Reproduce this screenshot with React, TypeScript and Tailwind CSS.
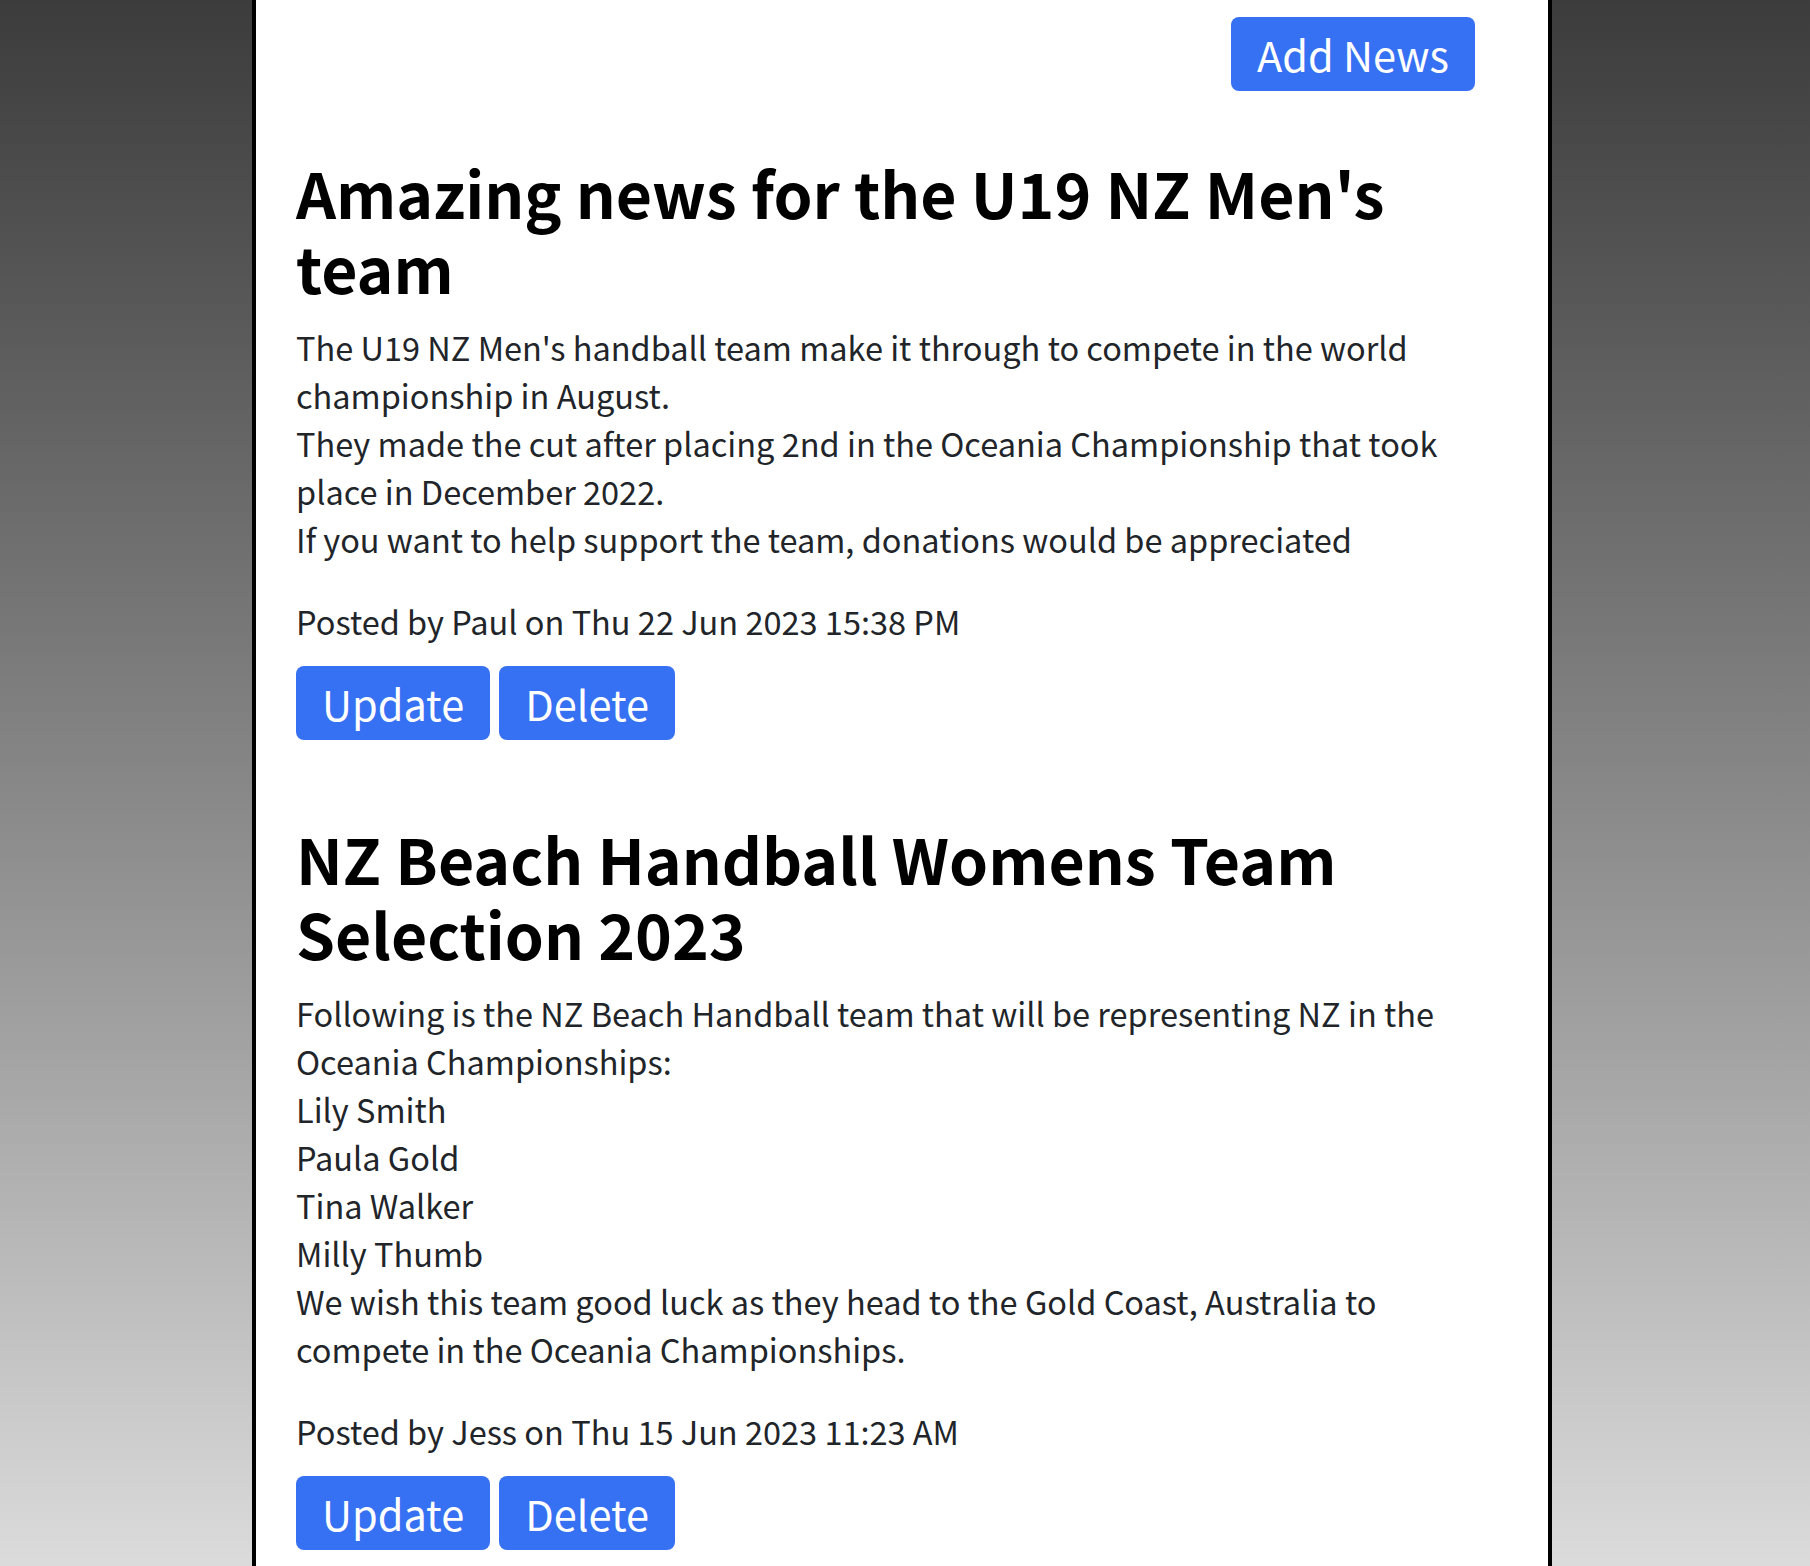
import React from "react";

type Post = {
  title: string;
  lines: string[];
  author: string;
  date: string;
};

const posts: Post[] = [
  {
    title: "Amazing news for the U19 NZ Men's team",
    lines: [
      "The U19 NZ Men's handball team make it through to compete in the world championship in August.",
      "They made the cut after placing 2nd in the Oceania Championship that took place in December 2022.",
      "If you want to help support the team, donations would be appreciated",
    ],
    author: "Paul",
    date: "Thu 22 Jun 2023 15:38 PM",
  },
  {
    title: "NZ Beach Handball Womens Team Selection 2023",
    lines: [
      "Following is the NZ Beach Handball team that will be representing NZ in the Oceania Championships:",
      "Lily Smith",
      "Paula Gold",
      "Tina Walker",
      "Milly Thumb",
      "We wish this team good luck as they head to the Gold Coast, Australia to compete in the Oceania Championships.",
    ],
    author: "Jess",
    date: "Thu 15 Jun 2023 11:23 AM",
  },
];

function Btn({ children }: { children: React.ReactNode }) {
  return (
    <button className="rounded-[8px] bg-[#3670f3] px-[26px] py-[7px] text-[41.5px] leading-[60px] text-white">
      {children}
    </button>
  );
}

export default function App() {
  return (
    <div className="min-h-[1566px] bg-linear-to-b from-[#3c3c3c] to-[#dedede] font-['Noto_Sans_CJK_KR',sans-serif]">
      <div className="ml-[252px] min-h-[1566px] w-[1300px] border-x-4 border-black bg-white pl-[40px] pr-[73px] pt-[17px] pb-10">
        <div className="flex justify-end">
          <Btn>Add News</Btn>
        </div>
        <div className="mt-[63px] flex flex-col gap-[80px]">
          {posts.map((p) => (
            <article key={p.title}>
              <h2 className="text-[62.5px] font-bold leading-[75px] text-black">{p.title}</h2>
              <div className="mt-[19px] text-[32.5px] leading-[48px] text-[#212529]">
                {p.lines.map((l) => (
                  <div key={l}>{l}</div>
                ))}
              </div>
              <p className="mt-[34px] text-[32.5px] leading-[48px] text-[#212529]">
                Posted by {p.author} on {p.date}
              </p>
              <div className="mt-[21px] flex gap-[9px]">
                <Btn>Update</Btn>
                <Btn>Delete</Btn>
              </div>
            </article>
          ))}
        </div>
      </div>
    </div>
  );
}
